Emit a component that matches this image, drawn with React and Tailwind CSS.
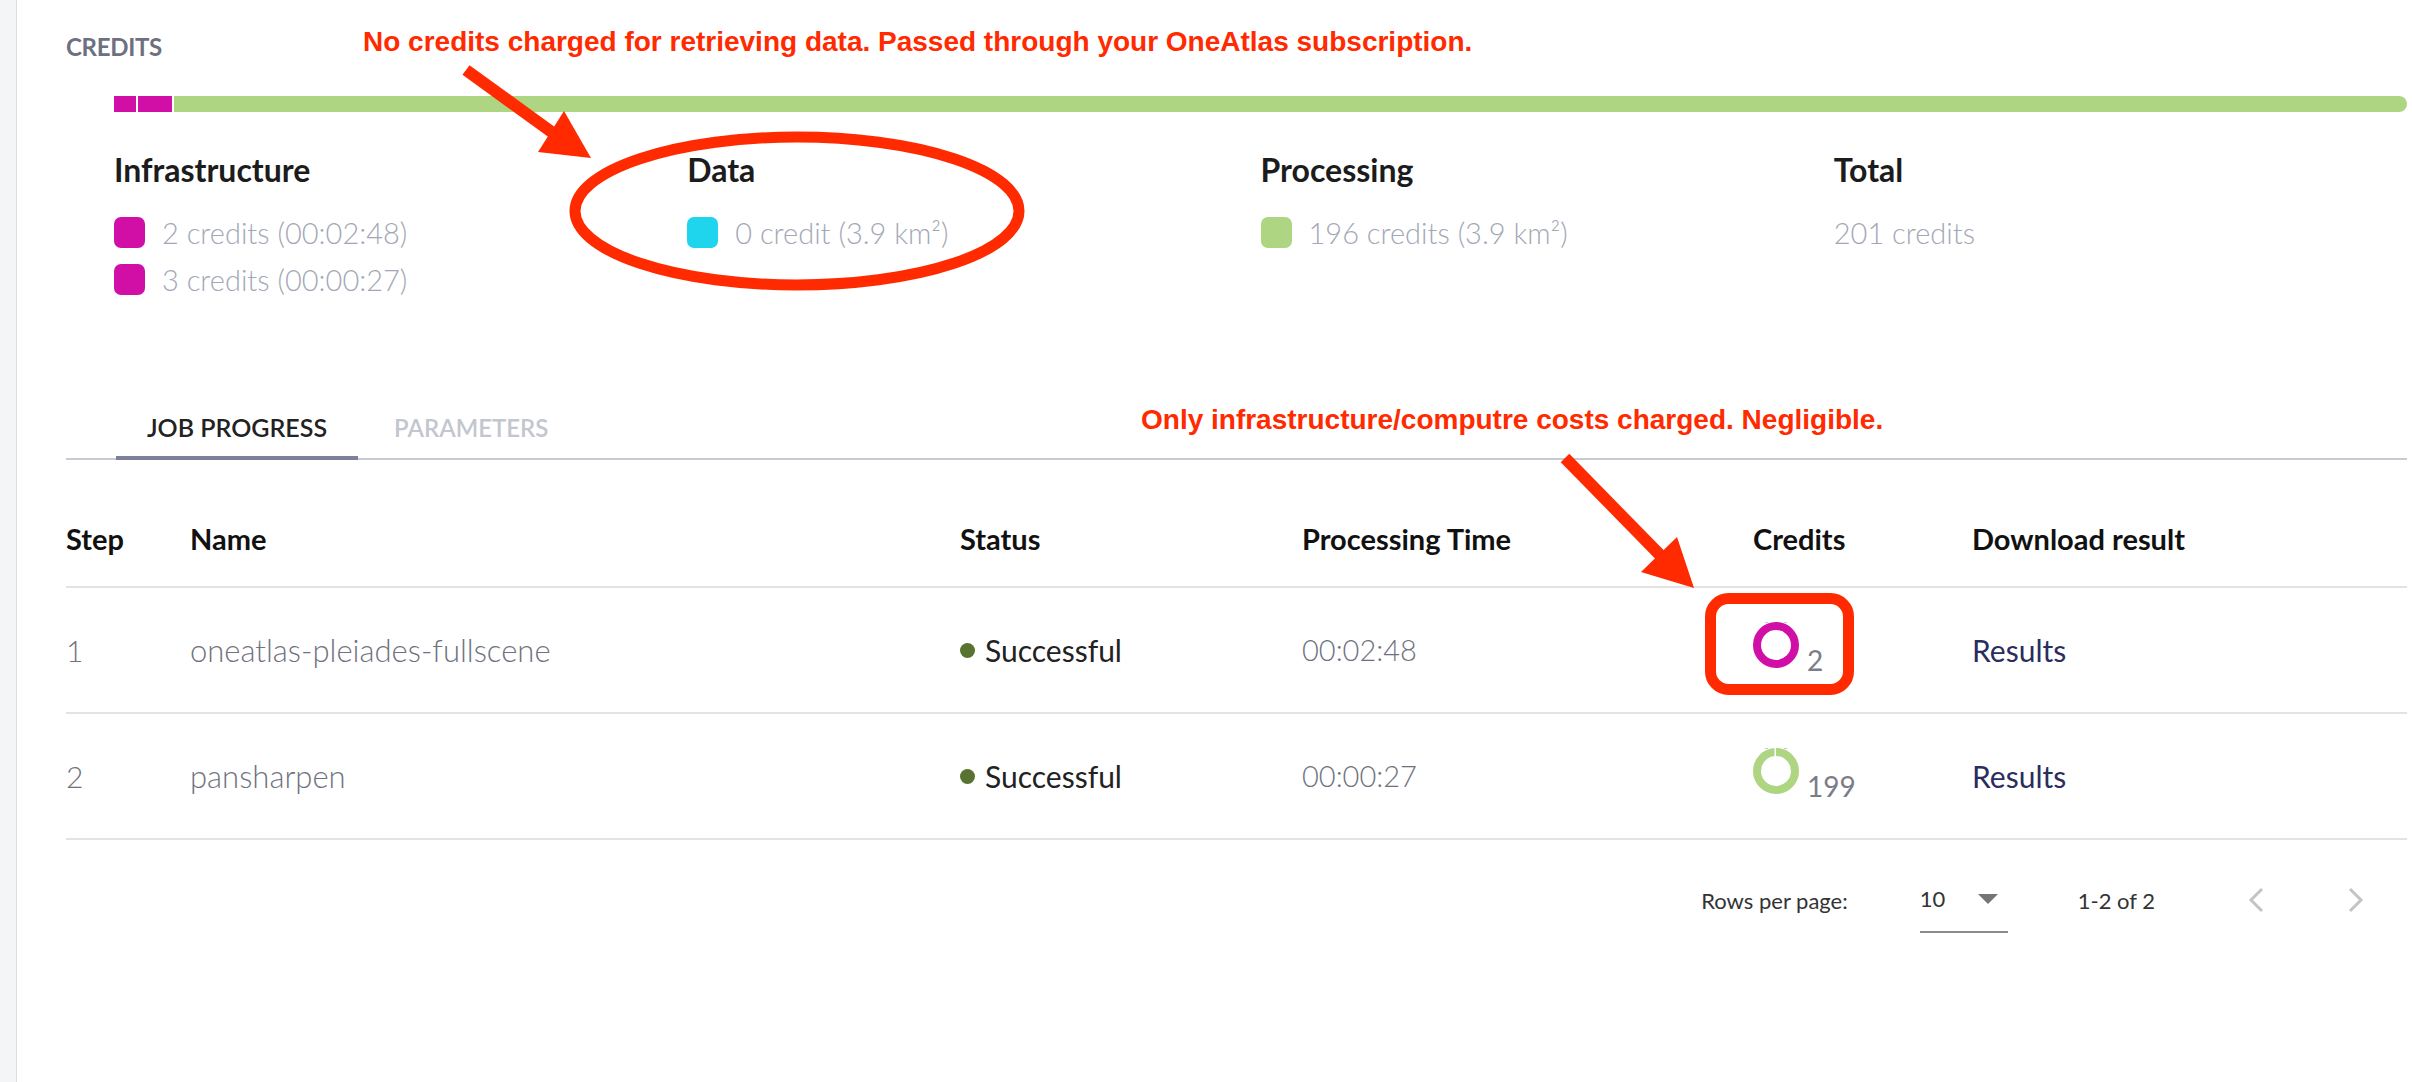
const legend = [
  {
    label: 'Infrastructure',
    items: [
      { color: 'bg-[#d10fa6]', text: '2 credits (00:02:48)' },
      { color: 'bg-[#d10fa6]', text: '3 credits (00:00:27)' },
    ],
  },
  { label: 'Data', items: [{ color: 'bg-[#1fd5ee]', text: '0 credit (3.9 km²)' }] },
  { label: 'Processing', items: [{ color: 'bg-[#aed581]', text: '196 credits (3.9 km²)' }] },
  { label: 'Total', items: [{ color: null, text: '201 credits' }] },
];

const steps = [
  { step: 1, name: 'oneatlas-pleiades-fullscene', time: '00:02:48', credits: 2, ring: '#d10fa6' },
  { step: 2, name: 'pansharpen', time: '00:00:27', credits: 199, ring: '#aed581' },
];

const cols = 'grid grid-cols-[124px_770px_342px_451px_219px_1fr]';

function Ring({ color, gap }) {
  return (
    <svg width="46" height="46" viewBox="0 0 46 46">
      <circle cx="23" cy="23" r="19" fill="none" stroke={color} strokeWidth="8" />
      {gap && <rect x="21.5" y="0" width="1.5" height="9" fill="#fff" />}
      <rect x="12" y="0" width="3" height="1" fill="#c9c9c9" />
      <rect x="31" y="0" width="3" height="1" fill="#c9c9c9" />
    </svg>
  );
}

function Annotations() {
  const red = '#ff2a00';
  return (
    <>
      <svg className="pointer-events-none absolute left-0 top-0" width="2412" height="1082" viewBox="0 0 2412 1082">
        <ellipse cx="797" cy="211" rx="222" ry="74" fill="none" stroke={red} strokeWidth="11" />
        <line x1="466" y1="70" x2="553" y2="133" stroke={red} strokeWidth="12" />
        <polygon points="591,158 538,152 564,111" fill={red} />
        <line x1="1565" y1="458" x2="1661" y2="556" stroke={red} strokeWidth="12" />
        <polygon points="1694,588 1641,572 1677,537" fill={red} />
        <rect x="1710.5" y="598.5" width="138" height="91" rx="18" fill="none" stroke={red} strokeWidth="11" />
      </svg>
      <p className="absolute left-[363px] top-[28px] font-['Liberation_Sans',Arial,sans-serif] text-[28px] font-bold leading-none text-[#ff2a00]">
        No credits charged for retrieving data. Passed through your OneAtlas subscription.
      </p>
      <p className="absolute left-[1141px] top-[406px] font-['Liberation_Sans',Arial,sans-serif] text-[28px] font-bold leading-none text-[#ff2a00]">
        Only infrastructure/computre costs charged. Negligible.
      </p>
    </>
  );
}

export default function App() {
  return (
    <div className="relative flex min-h-[1082px] w-[2412px] overflow-hidden bg-white font-['Lato',sans-serif]">
      <div className="w-[17px] shrink-0 border-r border-[#dcdde1] bg-[#f4f5f7]" />

      <main className="flex-1 pl-[49px] pr-[5px]">
        <h2 className="pt-[34px] text-[24px] font-bold leading-[26px] tracking-[-0.3px] text-[#6c7080]">CREDITS</h2>

        <div className="ml-[48px] mt-[36px]">
          <div className="flex h-4 gap-[2px]">
            <div className="w-[22px] bg-[#d10fa6]" />
            <div className="w-[34px] bg-[#d10fa6]" />
            <div className="flex-1 rounded-r-full bg-[#aed581]" />
          </div>

          <div className="mt-[40px] grid grid-cols-4">
            {legend.map(col => (
              <div key={col.label}>
                <p className="text-[32px] font-bold leading-[36px] text-[#1c1c1c]">{col.label}</p>
                <div className="mt-[21px]">
                  {col.items.map(item => (
                    <div key={item.text} className="flex h-[47px] items-center gap-[17px]">
                      {item.color && <span className={`h-[31px] w-[31px] rounded-[7px] ${item.color}`} />}
                      <span className="text-[29px] font-light text-[#a3a8b6]">{item.text}</span>
                    </div>
                  ))}
                </div>
              </div>
            ))}
          </div>
        </div>

        <div className="mt-[95px] flex border-b-2 border-[#c9cbd4]">
          <button className="relative ml-[50px] flex h-[60px] w-[242px] items-center justify-center text-[25px] font-semibold text-[#222]">
            JOB PROGRESS
            <span className="absolute -bottom-[2px] left-0 right-0 h-[4px] bg-[#7d809a]" />
          </button>
          <button className="flex h-[60px] items-center pl-[36px] text-[24px] font-semibold text-[#c3c6cf]">
            PARAMETERS
          </button>
        </div>

        <div className={`${cols} h-[128px] items-end border-b-2 border-[#e3e3e3] pb-[29px] text-[29px] font-bold leading-[36px] text-[#111]`}>
          <span>Step</span>
          <span>Name</span>
          <span>Status</span>
          <span>Processing Time</span>
          <span>Credits</span>
          <span>Download result</span>
        </div>

        {steps.map(s => (
          <div key={s.step} className={`${cols} h-[126px] items-center border-b-2 border-[#e3e3e3] text-[30px] font-light text-[#6f727e]`}>
            <span>{s.step}</span>
            <span className="text-[31px]">{s.name}</span>
            <span className="flex items-center gap-[10px] font-normal text-[#222]">
              <span className="h-[15px] w-[15px] rounded-full bg-[#58732f]" />
              Successful
            </span>
            <span className="text-[29px]">{s.time}</span>
            <span className="mb-[10px] flex items-end gap-[8px]">
              <Ring color={s.ring} gap={s.step === 2} />
              <span className="-mb-[6px] text-[28px] font-normal leading-none text-[#7a7d88]">{s.credits}</span>
            </span>
            <span className="font-normal text-[#2a2d5e]">Results</span>
          </div>
        ))}

        <div className="flex h-[120px] items-center justify-end pr-[27px] text-[22px] text-[#333]">
          <span>Rows per page:</span>
          <div className="ml-[72px] flex w-[88px] items-center border-b-2 border-[#8c8c8c] pb-[18px] pt-[18px]">
            <span className="leading-[28px]">10</span>
            <span className="ml-[33px] h-0 w-0 border-l-[10px] border-r-[10px] border-t-[10px] border-l-transparent border-r-transparent border-t-[#757575]" />
          </div>
          <span className="ml-[70px]">1-2 of 2</span>
          <button className="ml-[77px] flex w-[48px] justify-center">
            <svg width="18" height="26" viewBox="0 0 18 26">
              <path d="M15 2 L4 13 L15 24" fill="none" stroke="#c4c4c4" strokeWidth="3" />
            </svg>
          </button>
          <button className="ml-[52px] flex w-[48px] justify-center">
            <svg width="18" height="26" viewBox="0 0 18 26">
              <path d="M3 2 L14 13 L3 24" fill="none" stroke="#c4c4c4" strokeWidth="3" />
            </svg>
          </button>
        </div>
      </main>

      <Annotations />
    </div>
  );
}
